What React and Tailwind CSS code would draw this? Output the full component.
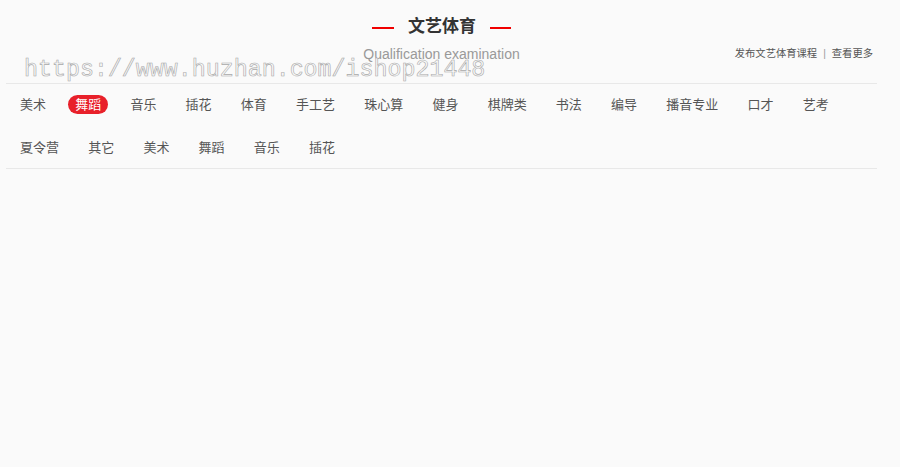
import React from "react";

const row = ["美术", "舞蹈", "音乐", "插花", "体育", "手工艺", "珠心算", "健身", "棋牌类", "书法", "编导", "播音专业", "口才", "艺考", "夏令营", "其它", "美术", "舞蹈", "音乐", "插花"];

export default function App() {
  return (
    <div className="min-h-[467px] w-full bg-[#fafafa] font-['Liberation_Sans','Noto_Sans_CJK_SC',sans-serif] relative">
      <div className="ml-[6px] w-[871px]">
        <div className="h-[84px] border-b border-[#e8e8e8] pt-[16px]">
          <div className="flex items-center justify-center gap-[14px] h-[22px]">
            <span className="block w-[22px] h-[2px] mt-[2px] bg-[#f00000]" />
            <span className="text-[17px] font-bold text-[#333] leading-[22px]">文艺体育</span>
            <span className="block w-[21px] h-[2px] mt-[2px] bg-[#f00000]" />
          </div>
          <div className="grid grid-cols-[1fr_auto_1fr] items-center mt-[6px] h-[20px]">
            <div />
            <div className="text-[14px] text-[#999] leading-[20px]">Qualification examination</div>
            <div className="flex justify-end items-center pr-[4px] text-[10.3px] text-[#555] leading-[14px]">
              <span>发布文艺体育课程</span>
              <span className="mx-[6px] text-[#999]">|</span>
              <span>查看更多</span>
            </div>
          </div>
        </div>
        <div className="flex flex-wrap gap-x-[15.2px] gap-y-[24px] pl-[7px] pt-[11px] pb-[11px] border-b border-[#e8e8e8]">
          {row.map((t, i) => (
            <span
              key={i}
              className={
                i === 1
                  ? "h-[19px] px-[7px] rounded-full bg-[#e8202a] text-white text-[13px] leading-[19px]"
                  : "h-[19px] px-[7px] text-[#555] text-[13px] leading-[19px]"
              }
            >
              {t}
            </span>
          ))}
        </div>
      </div>
      <div className="absolute left-[24px] top-[56px] font-['Liberation_Mono',monospace] text-[23.3px] leading-[28px] text-[#fafafa] [-webkit-text-stroke:0.6px_#a8a8a8] pointer-events-none whitespace-nowrap">
        https://www.huzhan.com/ishop21448
      </div>
    </div>
  );
}
